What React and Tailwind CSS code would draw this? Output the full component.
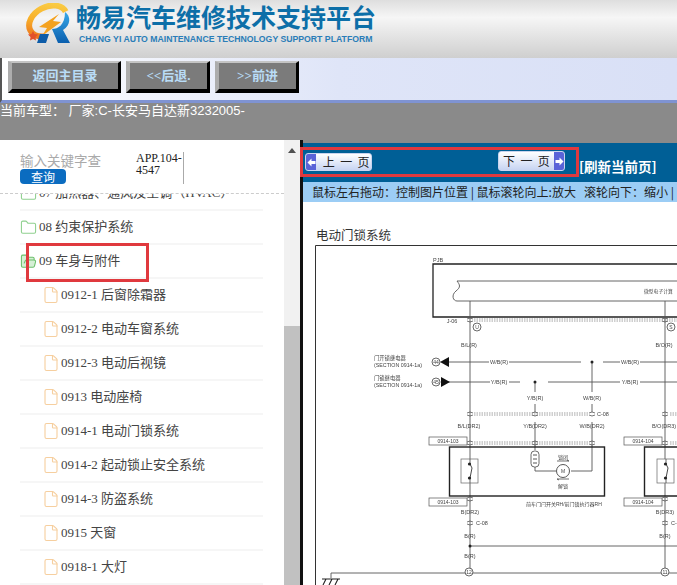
import { File, Folder, FolderOpen } from "lucide-react";

const treeRows = [
  { label: "0912-1 后窗除霜器" },
  { label: "0912-2 电动车窗系统" },
  { label: "0912-3 电动后视镜" },
  { label: "0913 电动座椅" },
  { label: "0914-1 电动门锁系统" },
  { label: "0914-2 起动锁止安全系统" },
  { label: "0914-3 防盗系统" },
  { label: "0915 天窗" },
  { label: "0918-1 大灯" },
];

const serif = "font-['Liberation_Serif','Noto_Sans_CJK_SC',serif]";

const Logo = () => (
  <svg width="51" height="44" viewBox="0 0 51 44" className="shrink-0">
    <defs>
      <linearGradient id="ring" x1="0" y1="1" x2="1" y2="0">
        <stop offset="0" stopColor="#e8641c" />
        <stop offset="0.5" stopColor="#f8b02a" />
        <stop offset="1" stopColor="#fad24a" />
      </linearGradient>
      <linearGradient id="rblue" x1="0" y1="0" x2="0" y2="1">
        <stop offset="0" stopColor="#38a8e8" />
        <stop offset="1" stopColor="#0b5fae" />
      </linearGradient>
    </defs>
    <ellipse cx="23" cy="18" rx="20" ry="14" transform="rotate(-28 23 18)" fill="none" stroke="url(#ring)" strokeWidth="6" pathLength="100" strokeDasharray="0 34 66 0" />
    <path d="M34 11 14 24l8 1-5 8 19-14-8-1z" fill="#f4a21f" />
    <path d="M8 28l1.500 3 3.500.5-2.500 2.500.5 3.500-3-1.500-3 1.500.5-3.500L3 31.500l3.500-.5z" fill="#e2512a" />
    <path d="M15 31h9l-3 9h-9z" fill="#0d5ca8" />
    <path d="M40 9c6 4 6 13-2 18l7 13H33l-6-14c6 0 13-4 13-17z" fill="url(#rblue)" />
  </svg>
);

const Wire = ({ d, w = 0.9 }) => <path d={d} fill="none" stroke="#555" strokeWidth={w} />;

const Label = ({ x, y, children, size = 5.500, anchor = "middle" }) => (
  <text x={x} y={y} fontSize={size} textAnchor={anchor} fill="#444" fontFamily="Liberation Sans, Noto Sans CJK SC, sans-serif">
    {children}
  </text>
);

const Pin = ({ x, y, label }) => (
  <g>
    <circle cx={x} cy={y} r="4" fill="#fff" stroke="#444" strokeWidth="0.8" />
    <Label x={x} y={y + 2} size={5}>{label}</Label>
  </g>
);

const Conn = ({ x, y }) => <path d={`M${x - 3} ${y - 1}q3 -2 6 0M${x - 3} ${y + 1}q3 2 6 0`} fill="none" stroke="#555" strokeWidth="0.8" />;

const Dash = ({ x1, x2, y }) => (
  <path d={`M${x1} ${y - 1}H${x2}M${x1} ${y + 1}H${x2}`} stroke="#888" strokeWidth="0.8" strokeDasharray="1.500 1" />
);

// page coordinates, the svg starts at 303,242
const Diagram = () => (
  <svg width="374" height="343" viewBox="303 242 374 343" className="block blur-[0.3px]">
    <path d="M677 245.500H315.500V585" fill="none" stroke="#333" strokeWidth="1" />
    <Label x={433} y={262} anchor="start">PJB</Label>
    <path d="M677 264H433V317H677" fill="none" stroke="#222" strokeWidth="1.300" />
    <path d="M677 281H457c3 4 4 6-1 10-5 4-3 10 1 10H677" fill="none" stroke="#555" strokeWidth="0.9" />
    <Label x={644} y={293} size={4.800} anchor="start">微型电子计算</Label>
    <Dash x1={474} x2={677} y={320} />
    <Label x={452} y={323}>J-06</Label>
    <Conn x={470} y={320} /><Conn x={665} y={320} />
    <Pin x={477} y={327} label="U" /><Pin x={671} y={327} label="S" />

    <Wire d="M470 301V572" /><Wire d="M665 301V572" />
    <Wire d="M445 362H489M509 362H581M603 362H620M640 362H677M592 362V392M592 404V412M592 422V447" />
    <Wire d="M445 382H490M509 382H520M548 382H620M640 382H677M535 382V392M535 404V412M535 422V450" />
    <Wire d="M535 467V471H556M571 471H592V447" />
    <circle cx="592" cy="362" r="1.500" fill="#222" /><circle cx="535" cy="382" r="1.500" fill="#222" />

    <Label x={374} y={360} anchor="start" size={5.300}>门开锁继电器</Label>
    <Label x={374} y={367} anchor="start" size={5.300}>(SECTION 0914-1a)</Label>
    <Label x={374} y={380} anchor="start" size={5.300}>门锁继电器</Label>
    <Label x={374} y={387} anchor="start" size={5.300}>(SECTION 0914-1a)</Label>
    <Pin x={436} y={362} label="44" /><Pin x={436} y={382} label="45" />
    <path d="M440 362l9-5v10z" fill="#111" /><path d="M441 377l9 5-9 5z" fill="#111" />

    <Label x={469} y={347}>B/L(R)</Label><Label x={664} y={347}>B/O(R)</Label>
    <Label x={499} y={364}>W/B(R)</Label><Label x={630} y={364}>W/B(R)</Label>
    <Label x={499} y={384}>Y/B(R)</Label><Label x={630} y={384}>Y/B(R)</Label>
    <Label x={535} y={400}>Y/B(R)</Label><Label x={592} y={400}>W/B(R)</Label>

    <Dash x1={474} x2={588} y={414} /><Dash x1={670} x2={677} y={414} />
    <Conn x={470} y={414} /><Conn x={535} y={414} /><Conn x={592} y={414} /><Conn x={665} y={414} />
    <Label x={597} y={416} anchor="start">C-08</Label>
    <Label x={469} y={428}>B/L(DR2)</Label><Label x={535} y={428}>Y/B(DR2)</Label>
    <Label x={592} y={428}>W/B(DR2)</Label><Label x={664} y={428}>B/O(DR3)</Label>

    <Dash x1={474} x2={588} y={443} /><Dash x1={670} x2={677} y={443} />
    <Conn x={470} y={443} /><Conn x={535} y={443} /><Conn x={592} y={443} /><Conn x={665} y={443} />
    {[[429, "0914-103", 437], [429, "0914-103", 498], [624, "0914-104", 437], [624, "0914-104", 498]].map(([x, t, y]) => (
      <g key={`${x}-${y}`}>
        <rect x={x} y={y} width="38" height="8" fill="#fff" stroke="#555" strokeWidth="0.7" />
        <Label x={x + 19} y={y + 6} size={5}>{t}</Label>
      </g>
    ))}
    <rect x="449.500" y="447" width="155" height="49" fill="none" stroke="#222" strokeWidth="1.400" />
    <path d="M677 447H644.500V496H677" fill="none" stroke="#222" strokeWidth="1.400" />
    {[461, 657].map((x) => (
      <g key={x}>
        <rect x={x} y="459" width="17" height="24" fill="#fff" stroke="#666" strokeWidth="0.7" />
        <Wire d={`M${x + 9} 459V464M${x + 9} 478V483`} />
        <path d={`M${x + 9} 464l2 4-2 10`} fill="none" stroke="#333" strokeWidth="0.9" />
        <circle cx={x + 8.500} cy="464" r="1.600" fill="#222" /><circle cx={x + 8.500} cy="478" r="1.600" fill="#222" />
      </g>
    ))}
    <rect x="531" y="451" width="8" height="16" rx="3.500" fill="#fff" stroke="#444" strokeWidth="0.8" />
    <path d="M533 455h4M533 459h4M533 463h4" stroke="#444" strokeWidth="0.9" />
    <circle cx="563" cy="471" r="6.500" fill="#fff" stroke="#444" strokeWidth="0.9" />
    <Label x={563} y={473} size={5}>M</Label>
    <path d="M557 461h12l-2-1M569 479h-12l2 1" fill="none" stroke="#333" strokeWidth="0.7" />
    <Label x={563} y={459} size={5}>锁闭</Label><Label x={563} y={488} size={5}>解锁</Label>
    <Label x={526} y={506} size={5} anchor="start">前车门闩开关RH/前门锁执行器RH</Label>

    <Conn x={470} y={499} /><Conn x={665} y={499} />
    <Label x={470} y={514}>B(DR2)</Label><Label x={665} y={514}>B(DR3)</Label>
    <Conn x={470} y={523} /><Conn x={665} y={523} />
    <Label x={476} y={525} anchor="start">C-08</Label><Label x={671} y={525} anchor="start">C-08</Label>
    <Label x={470} y={538}>B(R)</Label><Label x={665} y={538}>B(R)</Label>
    <Label x={470} y={558}>B(R)</Label>
    <Wire d="M470 546H677" />
    <circle cx="470" cy="546" r="1.500" fill="#222" />
    <Wire d="M331 578V573H677" />
    <Pin x={469} y={572} label="12" /><Pin x={665} y={572} label="11" />
    <path d="M322 579H340M326 579l-3 6M332 579l-3 6M338 579l-3 6" fill="none" stroke="#222" strokeWidth="1.100" />
  </svg>
);

const NavButton = ({ className, children }) => (
  <button className={`flex h-[32px] items-center justify-center border-t-2 border-l-4 border-r-[3px] border-b-4 border-t-[#c4c4c4] border-l-[#adadad] border-r-black border-b-black bg-[#7b7b7b] text-[13px] font-bold text-[#b9dcf6] ${serif} ${className}`}>
    {children}
  </button>
);

const PageArrow = ({ dir }) => (
  <span className="flex w-[10px] items-center justify-center bg-[#5a63d8]">
    <svg width="9" height="9" viewBox="0 0 9 9">
      <path d={dir === "left" ? "M0.500 4.500 4.500 0.500V3H8.500V6H4.500V8.500z" : "M8.500 4.500 4.500 0.500V3H0.500V6H4.500V8.500z"} fill="#fff" />
    </svg>
  </span>
);

const PageButton = ({ dir, className, children }) => (
  <button className={`flex items-stretch overflow-hidden rounded-[3px] border border-[#c9d4ee] bg-gradient-to-b from-white to-[#c7d4f2] text-[12px] text-[#222] ${className}`}>
    {dir === "left" && <PageArrow dir="left" />}
    <span className="flex-1 self-center text-center font-['Noto_Sans_CJK_SC',sans-serif] leading-none whitespace-pre">{children}</span>
    {dir === "right" && <PageArrow dir="right" />}
  </button>
);

const App = () => {
  return (
    <div className={`relative flex h-[585px] w-[677px] flex-col overflow-hidden bg-white ${serif}`}>
      <header className="flex h-[58px] items-start bg-gradient-to-b from-[#dedede] via-[#f6f6f6] via-30% to-[#cfcfcf] pl-[25px] pt-[3px]">
        <Logo />
        <div className="font-['Liberation_Sans','Noto_Sans_CJK_SC',sans-serif] text-[#0d6fa8]">
          <div className="text-[25px] font-bold leading-[31px] whitespace-nowrap">畅易汽车维修技术支持平台</div>
          <div className="ml-[3px] text-[8.7px] font-bold leading-[10px] whitespace-nowrap text-[#2a7db8]">CHANG YI AUTO MAINTENANCE TECHNOLOGY SUPPORT PLATFORM</div>
        </div>
      </header>

      <nav className="flex h-[45px] items-start gap-[5px] border-b-[3px] border-l-2 border-b-[#7f93d2] border-l-[#555] bg-gradient-to-r from-white via-[#dfe5f8] to-[#d9e0f6] pl-[6px] pt-[3px]">
        <NavButton className="w-[113px]">返回主目录</NavButton>
        <NavButton className="w-[84px]">&lt;&lt;后退.</NavButton>
        <NavButton className="w-[84px]">&gt;&gt;前进</NavButton>
      </nav>

      <div className="h-[37px] bg-[#8a8a8a] font-['Liberation_Sans','Noto_Sans_CJK_SC',sans-serif] text-[13px] leading-[15px] whitespace-nowrap text-white">
        当前车型： 厂家:C-长安马自达新3232005-
      </div>

      <div className="flex min-h-0 flex-1">
        <aside className="flex w-[284px] shrink-0 flex-col">
          <div className="flex h-[53px] shrink-0 pl-[20px] pt-[12px]">
            <div className="w-[116px] font-['Noto_Sans_CJK_SC',sans-serif]">
              <div className="text-[13.5px] leading-[17px] text-[#aaaaaa]">输入关键字查</div>
              <button className="block h-[15px] w-[46px] rounded-[4px] bg-[#0b6cc0] text-[12px] leading-[15px] text-white">查询</button>
            </div>
            <div className="h-[32px] w-[48px] border-r border-[#aaaaaa] text-[12px] leading-[12px] text-[#222]">
              APP.104-4547
            </div>
          </div>
          <div className="min-h-0 flex-1 overflow-hidden border-t border-dashed border-[#cccccc] font-['Liberation_Serif','Noto_Sans_CJK_SC',serif] text-[13px] text-[#444]">
            <div className="-mt-[17px] ml-[20px] w-[243px]">
              <div className="flex h-[34px] items-center gap-[2px] border-b-2 border-[#f6f6f6]">
                <Folder size={17} strokeWidth={1.500} className="shrink-0 text-[#8ed08e]" />
                07 加热器、通风及空调（HVAC）
              </div>
              <div className="flex h-[34px] items-center gap-[2px] border-b-2 border-[#f6f6f6]">
                <Folder size={17} strokeWidth={1.500} className="shrink-0 text-[#8ed08e]" />
                08 约束保护系统
              </div>
              <div className="flex h-[34px] items-center gap-[2px] border-b-2 border-[#f6f6f6]">
                <FolderOpen size={17} strokeWidth={1.500} className="shrink-0 fill-[#d5efd5] text-[#6cc06c]" />
                09 车身与附件
              </div>
              {treeRows.map((row) => (
                <div key={row.label} className="flex h-[34px] items-center gap-[1px] border-b-2 border-[#f6f6f6] pl-[22px]">
                  <File size={18} strokeWidth={1.500} className="shrink-0 text-[#f6cf9f]" />
                  {row.label}
                </div>
              ))}
            </div>
          </div>
        </aside>

        <div className="flex w-[16px] shrink-0 flex-col bg-[#f1f1f1]">
          <div className="mt-[8px] h-0 w-0 self-center border-x-[4px] border-b-[5px] border-x-transparent border-b-[#505050]" />
          <div className="mt-[173px] min-h-0 flex-1 bg-[#c1c1c1]" />
        </div>

        <main className="flex min-w-0 flex-1 flex-col border-l-[3px] border-l-[#111] font-['Noto_Sans_CJK_SC',sans-serif]">
          <div className="h-[3px] shrink-0 bg-[#8a8a8a]" />
          <div className="flex h-[39px] shrink-0 bg-[#005f96] pl-[2px]">
            <PageButton dir="left" className="mt-[10px] h-[18px] w-[67px]">{"  上  一  页"}</PageButton>
            <PageButton dir="right" className="ml-[126px] mt-[8px] h-[20px] w-[67px]">{"下  一  页"}</PageButton>
            <span className="ml-[14px] mt-[14px] text-[13.5px] leading-[18px] font-bold whitespace-nowrap text-white">[刷新当前页]</span>
          </div>
          <div className="h-[20px] shrink-0 overflow-hidden whitespace-nowrap bg-[#9ccdf5] pl-[9px] text-[12px] leading-[20px] text-[#222]">
            鼠标左右拖动：控制图片位置 | 鼠标滚轮向上:放大&nbsp;&nbsp;&nbsp;滚轮向下：缩小 |
          </div>
          <div className="min-h-0 flex-1 overflow-hidden bg-white">
            <div className="h-[40px] pl-[13px] pt-[24px] text-[12.5px] leading-[17px] text-[#333]">电动门锁系统</div>
            <Diagram />
          </div>
        </main>
      </div>

      <div className="absolute left-[300px] top-[147px] h-[30px] w-[279px] border-[3px] border-[#e0393e]" />
      <div className="absolute left-[26px] top-[243px] h-[39px] w-[123px] border-[3px] border-[#e0393e]" />
    </div>
  );
};

export default App;
